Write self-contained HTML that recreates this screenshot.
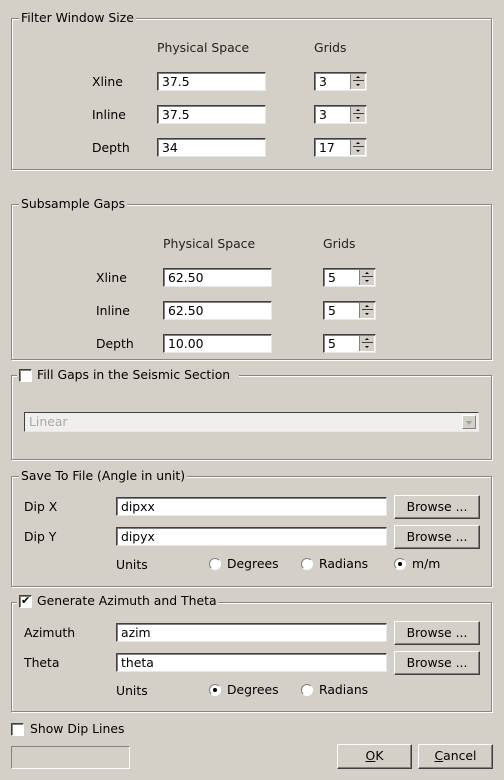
<!DOCTYPE html>
<html><head><style>
body{margin:0;width:504px;height:780px;background:#d4d0c8;font-family:"DejaVu Sans","Liberation Sans",sans-serif;font-size:12.4px;color:#000;position:relative;overflow:hidden}
div,span{position:absolute;box-sizing:border-box}
.g{border:1px solid #8a8782;box-shadow:1px 1px 0 #fff, inset 1px 1px 0 #fff}
.t{background:#d4d0c8;padding:0 2px;line-height:14px;white-space:nowrap}
.l{white-space:nowrap;line-height:14px}
.f{background:#fff;border:1px solid;border-color:#404040 #e8e8e8 #e8e8e8 #404040;box-shadow:inset 1px 1px 0 #808080;padding:2px 0 0 4px;line-height:14px;white-space:nowrap}
.sp{width:15px;height:15px;right:1px;top:1px;background:#d4d0c8;border-left:1px solid #808080}
.sp:before{content:"";position:absolute;left:2px;right:1px;top:6px;border-top:1px solid #404040}
.sp:after{content:"";position:absolute;left:5px;top:2px;width:0;height:0;border:2px solid transparent;border-bottom-color:#000;border-top:0}
.dn{position:absolute;left:5px;top:10px;width:0;height:0;border:2px solid transparent;border-top-color:#000;border-bottom:0}
.b{background:#d4d0c8;border:1px solid;border-color:#fff #404040 #404040 #fff;box-shadow:inset -1px -1px 0 #808080;text-align:center;line-height:22px}
.cb{width:13px;height:13px;background:#fff;border:1px solid;border-color:#404040 #fff #fff #404040;box-shadow:inset 1px 1px 0 #808080}
.r{width:12px;height:12px;border-radius:50%;background:#fff;border:1px solid;border-color:#808080 #fff #fff #808080}
.r.on:after{content:"";position:absolute;left:3px;top:3px;width:4px;height:4px;border-radius:50%;background:#000}
</style></head><body>

<div class="g" style="left:11px;top:18px;width:481px;height:152px"></div>
<span class="t" style="left:19px;top:11px">Filter Window Size</span>
<span class="l" style="left:157px;top:41px;color:#222">Physical Space</span>
<span class="l" style="left:314px;top:41px;color:#222">Grids</span>
<span class="l" style="left:92px;top:75px">Xline</span>
<span class="l" style="left:92px;top:108px">Inline</span>
<span class="l" style="left:92px;top:141px">Depth</span>
<div class="f" style="left:157px;top:72px;width:109px;height:19px">37.5</div>
<div class="f" style="left:157px;top:105px;width:109px;height:19px">37.5</div>
<div class="f" style="left:157px;top:138px;width:109px;height:19px">34</div>
<div class="f" style="left:314px;top:72px;width:53px;height:19px">3<span class="sp"><i class="dn"></i></span></div>
<div class="f" style="left:314px;top:105px;width:53px;height:19px">3<span class="sp"><i class="dn"></i></span></div>
<div class="f" style="left:314px;top:138px;width:53px;height:19px">17<span class="sp"><i class="dn"></i></span></div>

<div class="g" style="left:11px;top:204px;width:481px;height:156px"></div>
<span class="t" style="left:19px;top:197px">Subsample Gaps</span>
<span class="l" style="left:163px;top:237px;color:#222">Physical Space</span>
<span class="l" style="left:323px;top:237px;color:#222">Grids</span>
<span class="l" style="left:96px;top:271px">Xline</span>
<span class="l" style="left:96px;top:304px">Inline</span>
<span class="l" style="left:96px;top:337px">Depth</span>
<div class="f" style="left:163px;top:268px;width:109px;height:19px">62.50</div>
<div class="f" style="left:163px;top:301px;width:109px;height:19px">62.50</div>
<div class="f" style="left:163px;top:334px;width:109px;height:19px">10.00</div>
<div class="f" style="left:323px;top:268px;width:53px;height:19px">5<span class="sp"><i class="dn"></i></span></div>
<div class="f" style="left:323px;top:301px;width:53px;height:19px">5<span class="sp"><i class="dn"></i></span></div>
<div class="f" style="left:323px;top:334px;width:53px;height:19px">5<span class="sp"><i class="dn"></i></span></div>

<div class="g" style="left:11px;top:375px;width:481px;height:85px"></div>
<span class="t" style="left:17px;top:367px;width:222px;height:16px"></span>
<div class="cb" style="left:19px;top:369px"></div>
<span class="l" style="left:37px;top:368px">Fill Gaps in the Seismic Section</span>
<div class="f" style="left:24px;top:412px;width:455px;height:20px;background:#f0efed;color:#a8a8a8;box-shadow:none">Linear<span style="right:2px;top:2px;width:14px;height:14px;border:1px solid;border-color:#fff #808080 #808080 #fff;background:#d4d0c8"><i style="position:absolute;left:3px;top:5px;border:3px solid transparent;border-top:4px solid #a0a0a0;border-bottom:0"></i></span></div>

<div class="g" style="left:11px;top:476px;width:481px;height:111px"></div>
<span class="t" style="left:19px;top:469px">Save To File (Angle in unit)</span>
<span class="l" style="left:24px;top:500px">Dip X</span>
<span class="l" style="left:24px;top:530px">Dip Y</span>
<div class="f" style="left:116px;top:497px;width:271px;height:19px">dipxx</div>
<div class="f" style="left:116px;top:527px;width:271px;height:19px">dipyx</div>
<div class="b" style="left:394px;top:495px;width:86px;height:24px">Browse ...</div>
<div class="b" style="left:394px;top:525px;width:86px;height:24px">Browse ...</div>
<span class="l" style="left:116px;top:558px">Units</span>
<div class="r" style="left:209px;top:558px"></div><span class="l" style="left:227px;top:557px">Degrees</span>
<div class="r" style="left:301px;top:558px"></div><span class="l" style="left:319px;top:557px">Radians</span>
<div class="r on" style="left:394px;top:558px"></div><span class="l" style="left:412px;top:557px">m/m</span>

<div class="g" style="left:11px;top:602px;width:481px;height:110px"></div>
<span class="t" style="left:17px;top:594px;width:201px;height:16px"></span>
<div class="cb" style="left:19px;top:595px"><span style="left:1px;top:-2px;font-size:11px;line-height:13px">✔</span></div>
<span class="l" style="left:37px;top:594px">Generate Azimuth and Theta</span>
<span class="l" style="left:24px;top:626px">Azimuth</span>
<span class="l" style="left:24px;top:656px">Theta</span>
<div class="f" style="left:116px;top:623px;width:271px;height:19px">azim</div>
<div class="f" style="left:116px;top:653px;width:271px;height:19px">theta</div>
<div class="b" style="left:394px;top:621px;width:86px;height:24px">Browse ...</div>
<div class="b" style="left:394px;top:651px;width:86px;height:24px">Browse ...</div>
<span class="l" style="left:116px;top:684px">Units</span>
<div class="r on" style="left:209px;top:684px"></div><span class="l" style="left:227px;top:683px">Degrees</span>
<div class="r" style="left:301px;top:684px"></div><span class="l" style="left:319px;top:683px">Radians</span>

<div class="cb" style="left:11px;top:723px"></div>
<span class="l" style="left:30px;top:722px">Show Dip Lines</span>
<div style="left:11px;top:746px;width:119px;height:23px;border:1px solid;border-color:#808080 #fff #fff #808080"></div>
<div class="b" style="left:337px;top:744px;width:75px;height:25px"><u>O</u>K</div>
<div class="b" style="left:418px;top:744px;width:75px;height:25px"><u>C</u>ancel</div>
</body></html>
